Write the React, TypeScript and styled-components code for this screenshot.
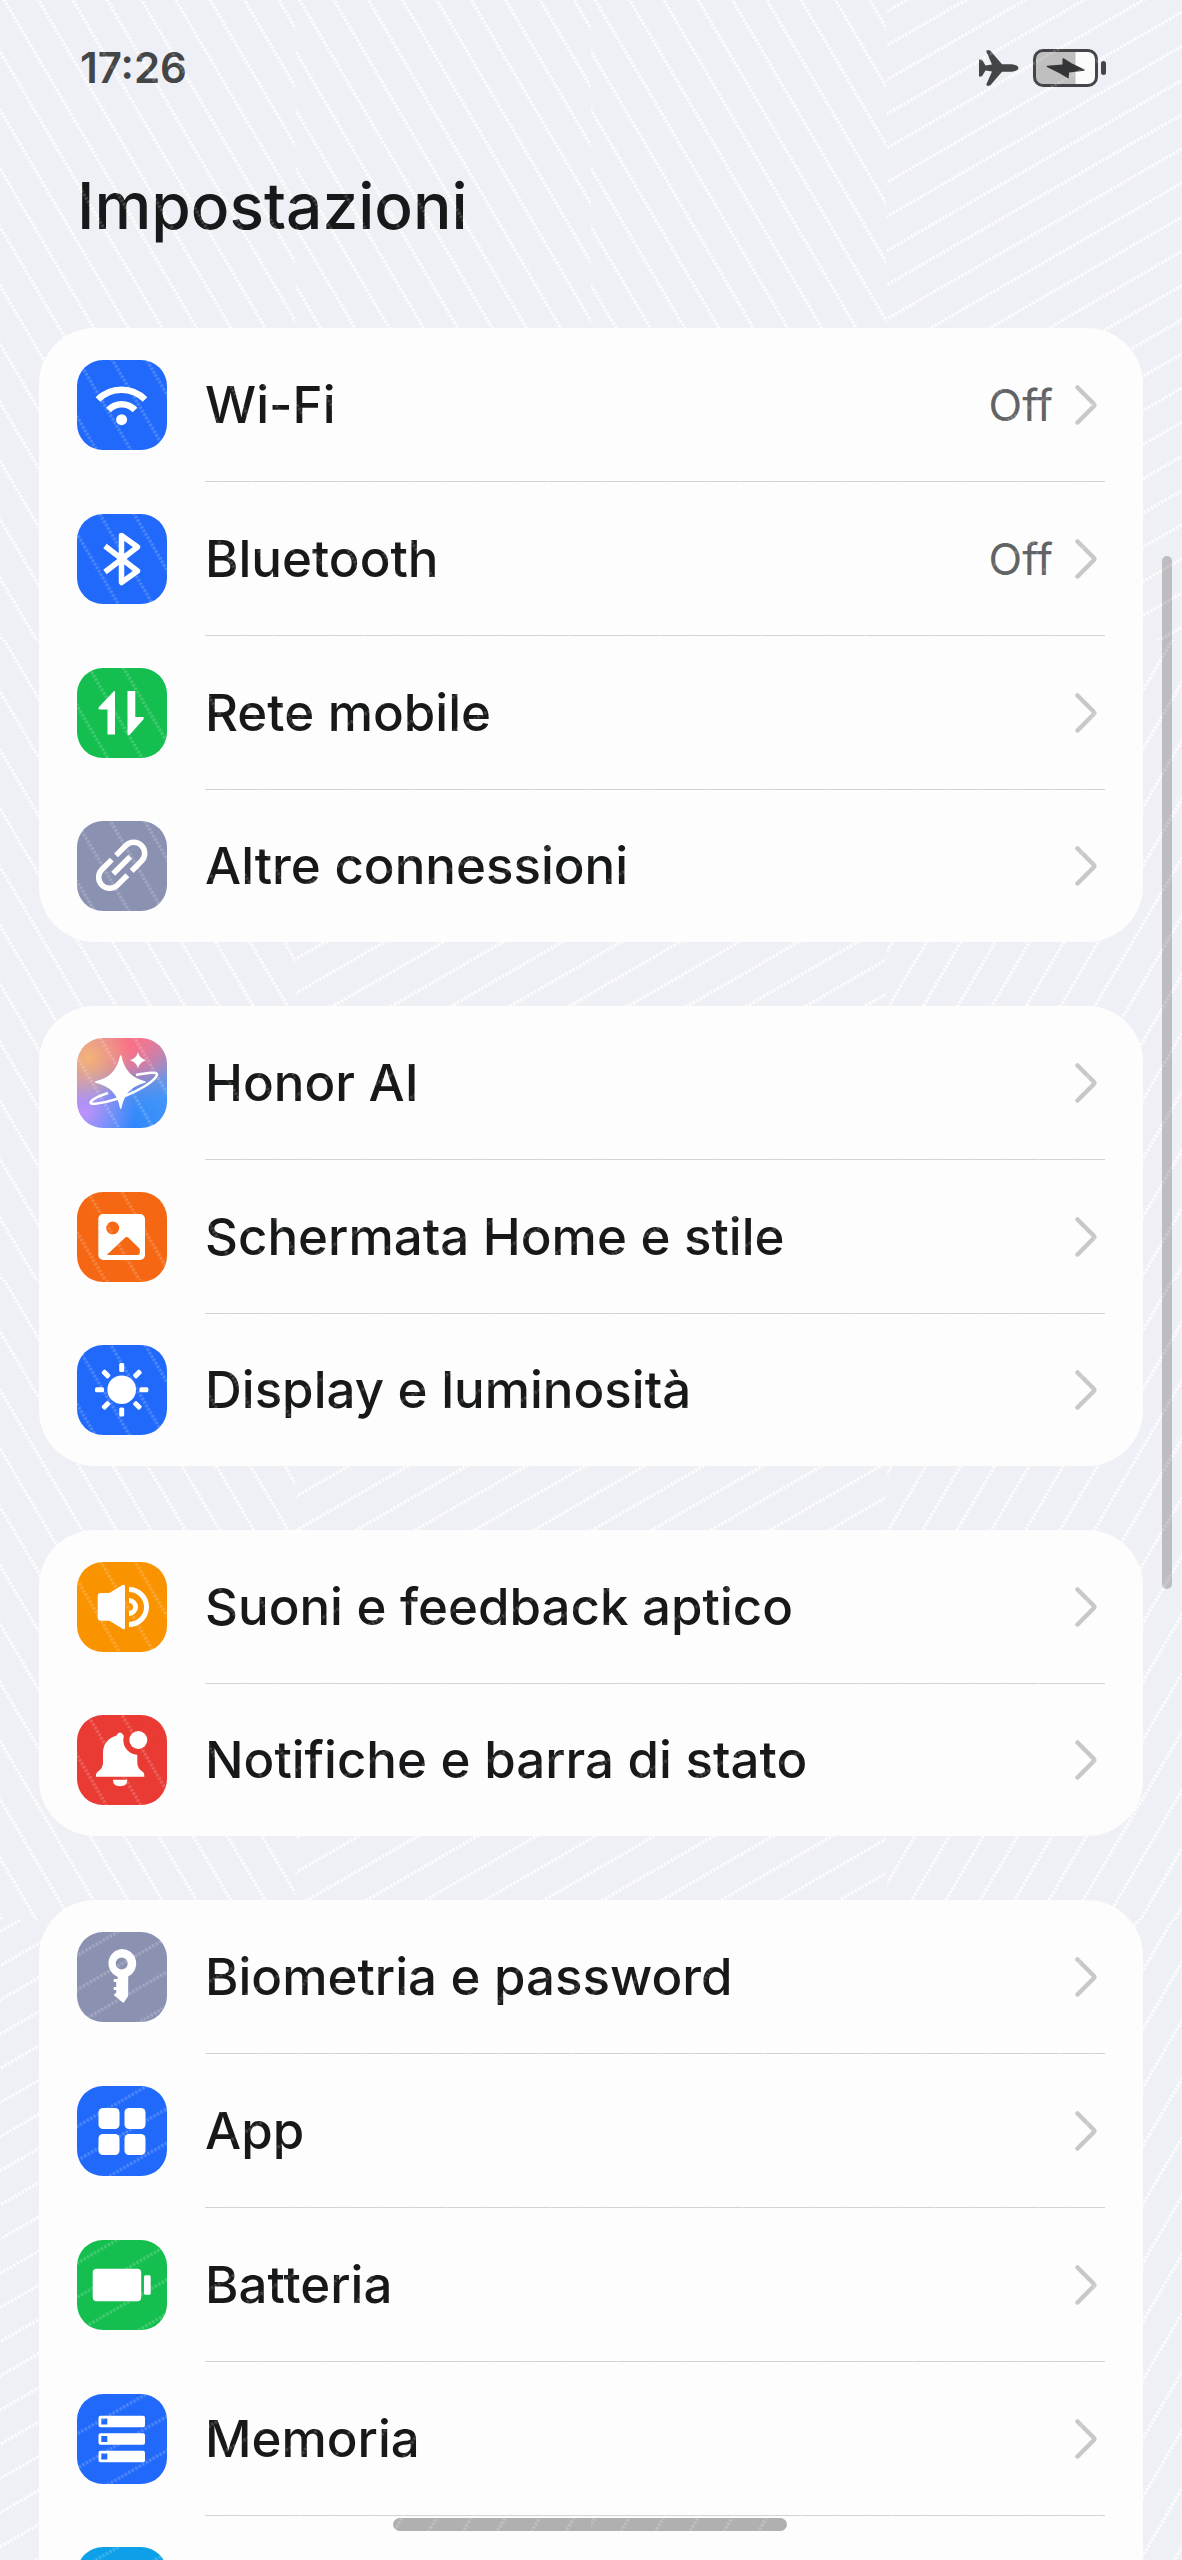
import type { ReactNode } from 'react';
import { createGlobalStyle, styled } from 'styled-components';

type Setting = {
  label: string;
  color: string;
  icon: ReactNode;
  value?: string;
};

const WifiIcon = (
  <g fill="none" stroke="#fff" strokeWidth="6.5">
    <path d="M21 39.5A33 33 0 0 1 68 39.5" />
    <path d="M31.5 50A18 18 0 0 1 58 50" />
    <circle cx="44.6" cy="59.7" r="5.5" fill="#fff" stroke="none" />
  </g>
);

const BluetoothIcon = (
  <path
    d="M28 32 60.5 57 44.5 68.5V21.5L60.5 33 28 58"
    fill="none"
    stroke="#fff"
    strokeWidth="5.5"
    strokeLinejoin="round"
  />
);

const MobileIcon = (
  <path
    d="M37 23q1 0 1 1V66.5H30.5V41.5H22.5q-2-.5-.5-2.5ZM50.5 23h7.8v26h7.5q2 .5.5 2.5L52.5 67q-2 .5-2-1Z"
    fill="#fff"
  />
);

const LinkIcon = (
  <g transform="translate(44.7 44.3) rotate(-45)" fill="none" stroke="#fff" strokeWidth="5.5">
    <path d="M3 -11H17a11 11 0 0 1 0 22H3" />
    <path d="M-3 11H-17a11 11 0 0 1 0-22H-3" />
    <path d="M-12 0H12" />
  </g>
);

const HonorIcon = (
  <>
    <path
      d="M43.7 18C46.5 33 54 41 68 44 54 47.5 46.5 55 43.7 70 41 55 33 47.5 18.7 44 33 41 41 33 43.7 18Z"
      fill="#fff"
      stroke="#fff"
      strokeWidth="1.5"
      strokeLinejoin="round"
    />
    <path d="M61 14q1.5 6.5 8 8.3-6.5 1.8-8 8.3-1.5-6.5-8-8.3 6.5-1.8 8-8.3Z" fill="#fff" />
    <path
      d="M31 55C13 61 8 67 20 65.5 46 62 76 46 80 37 81 33 70 35 59 37"
      fill="none"
      stroke="#fff"
      strokeWidth="2.4"
    />
  </>
);

const PictureIcon = (
  <>
    <rect x="21.3" y="22" width="46.7" height="46" rx="5" fill="#fff" />
    <circle cx="35.7" cy="36" r="6.5" fill="#f56713" />
    <path d="M29.7 63 48 45.8q1.7-1.5 3.4 0L62 56q.8.8.8 2v2.5q0 2.5-2.5 2.5Z" fill="#f56713" />
  </>
);

const SunIcon = (
  <>
    <circle cx="44.7" cy="44.7" r="14.3" fill="#fff" />
    {[0, 45, 90, 135, 180, 225, 270, 315].map((angle) => (
      <rect
        key={angle}
        x="42.2"
        y="18"
        width="5"
        height="9"
        rx="1.5"
        fill="#fff"
        transform={`rotate(${angle} 44.7 44.7)`}
      />
    ))}
  </>
);

const SoundIcon = (
  <>
    <path
      d="M24 31h7q2 0 3.5-1.2L45.5 23q2.5-1.2 2.5 1.5v41q0 2.7-2.5 1.3L34.5 60Q33 58.8 31 58.8H24q-3.3 0-3.3-3.3V34.3Q20.7 31 24 31Z"
      fill="#fff"
    />
    <g fill="none" stroke="#fff" strokeWidth="5">
      <path d="M52 38.5a6.5 6.5 0 0 1 0 13" />
      <path d="M52 27.5a17.5 17.5 0 0 1 0 35" />
    </g>
  </>
);

const BellIcon = (
  <>
    <path
      d="M39.5 20.5Q41 17.5 43 17.5t3.5 3C56 23 60.3 30 60.3 38v10q0 5 5 8.5 2 1.3 2 3.3v1.9H19v-1.9q0-2 2-3.3 5-3.5 5-8.5V38c0-8 4.5-15 13.5-17.5Z"
      fill="#fff"
    />
    <path d="M36 64.7H50.3q0 6.5-7.2 6.5T36 64.7Z" fill="#fff" />
    <circle cx="61.3" cy="25" r="15" fill="#e93a33" />
    <circle cx="61.3" cy="25" r="9" fill="#fff" />
  </>
);

const KeyIcon = (
  <path
    fillRule="evenodd"
    d="M44.7 17a14.5 14.5 0 0 1 6.5 27.5V63q0 1.5-1 2.5l-3 4.5q-1 1.5-2 0l-8.5-7 2.5-2.5v-2.5h-2.5v-3h2.5v-5h-2.5v-3h4V45A14.5 14.5 0 0 1 44.7 17Zm0 8.5a6 6 0 1 0 0 12 6 6 0 1 0 0-12Z"
    fill="#fff"
  />
);

const AppsIcon = (
  <g fill="#fff">
    <rect x="21.5" y="22" width="21" height="21" rx="4.5" />
    <rect x="47.5" y="22" width="21" height="21" rx="4.5" />
    <rect x="21.5" y="48" width="21" height="21" rx="4.5" />
    <rect x="47.5" y="48" width="21" height="21" rx="4.5" />
  </g>
);

const BatteryIcon = (
  <g fill="#fff">
    <rect x="15.7" y="28.7" width="48.5" height="32.5" rx="4" />
    <rect x="67" y="35.3" width="6.7" height="19.4" rx="1.5" />
  </g>
);

const StorageIcon = (
  <>
    {[21.7, 39.2, 56.7].map((y) => (
      <g key={y}>
        <rect x="21.5" y={y} width="46.5" height="11.6" rx="2" fill="#fff" />
        <rect x="24.3" y={y + 2.8} width="6" height="6" fill="#2069fa" />
      </g>
    ))}
  </>
);

const groups: Setting[][] = [
  [
    { label: 'Wi-Fi', color: '#2069fa', icon: WifiIcon, value: 'Off' },
    { label: 'Bluetooth', color: '#2069fa', icon: BluetoothIcon, value: 'Off' },
    { label: 'Rete mobile', color: '#14be4f', icon: MobileIcon },
    { label: 'Altre connessioni', color: '#8b91b1', icon: LinkIcon },
  ],
  [
    {
      label: 'Honor AI',
      color:
        'radial-gradient(circle at 12% 22%, #f3b377 0%, #f3b37700 42%), radial-gradient(circle at 58% 8%, #fb6f86 0%, #fb6f8600 48%), radial-gradient(circle at 8% 82%, #bd92fb 0%, #bd92fb00 46%), radial-gradient(circle at 60% 100%, #2f86fb 0%, #2f86fb00 60%), linear-gradient(160deg, #d985a8 20%, #4a9bf7 75%)',
      icon: HonorIcon,
    },
    { label: 'Schermata Home e stile', color: '#f56713', icon: PictureIcon },
    { label: 'Display e luminosità', color: '#2069fa', icon: SunIcon },
  ],
  [
    { label: 'Suoni e feedback aptico', color: '#fa9300', icon: SoundIcon },
    { label: 'Notifiche e barra di stato', color: '#e93a33', icon: BellIcon },
  ],
  [
    { label: 'Biometria e password', color: '#8b91b1', icon: KeyIcon },
    { label: 'App', color: '#2069fa', icon: AppsIcon },
    { label: 'Batteria', color: '#14be4f', icon: BatteryIcon },
    { label: 'Memoria', color: '#2069fa', icon: StorageIcon },
    { label: '', color: '#0da0e8', icon: null },
  ],
];

// Direction of the dotted lines in each cell of the 4 x 4 backdrop
const cells = [
  ['fall', 'fall', 'fall', 'low'],
  ['fall', 'low', 'low', 'rise'],
  ['fall', 'low', 'low', 'rise'],
  ['low', 'rise', 'rise', 'rise'],
];

const lines = [
  { name: 'fall', angle: 59.6, start: 52 },
  { name: 'low', angle: -30, start: 12 },
  { name: 'rise', angle: -59.6, start: 20 },
];

const DottedLines = ({ id, opacity }: { id: string; opacity: number }) => (
  <Backdrop aria-hidden="true" opacity={opacity}>
    <defs>
      {lines.map(({ name, angle, start }) => (
        <pattern
          key={name}
          id={`${id}-${name}`}
          width="4"
          height="29.6"
          patternUnits="userSpaceOnUse"
          patternTransform={`translate(0 ${start}) rotate(${angle}) translate(0 -3)`}
        >
          <rect x="0.6" y="1" width="2.6" height="3.4" rx="0.8" fill="#fff" />
        </pattern>
      ))}
    </defs>
    {cells.map((row, y) =>
      row.map((name, x) => (
        <svg key={`${x}-${y}`} x={`${x * 25}%`} y={`${y * 25}%`} width="25%" height="25%">
          <rect width="100%" height="100%" fill={`url(#${id}-${name})`} />
        </svg>
      ))
    )}
  </Backdrop>
);

const SettingRow = ({ label, color, icon, value }: Setting) => (
  <li>
    <RowLink href="#">
      <IconTile $color={color}>
        <svg viewBox="0 0 90 90" width="90" height="90" aria-hidden="true">
          {icon}
        </svg>
      </IconTile>
      <RowBody>
        <Label>{label}</Label>
        {value && <Value>{value}</Value>}
        <svg viewBox="0 0 22 40" width="22" height="40" aria-hidden="true">
          <path
            d="M2.5 2.5 18.5 18.5q1.5 1.5 0 3L2.5 37.5"
            fill="none"
            stroke="#c8c8c8"
            strokeWidth="4.5"
            strokeLinecap="round"
          />
        </svg>
      </RowBody>
    </RowLink>
  </li>
);

const App = () => {
  return (
    <Screen>
      <GlobalStyle />
      <DottedLines id="back" opacity={0.9} />
      <StatusBar>
        <time>17:26</time>
        <StatusIcons>
          <svg viewBox="0 0 40 36" width="40" height="36" aria-hidden="true">
            <path
              d="M0 9.5H2q1 0 1.5 1L6.5 15.5 13 14.5 7.5 2Q7 .3 8.5.3H10q1 0 1.800 1L23 14.3H33q6.5 1 6.5 3.7T33 21.7H23L11.8 34.7q-.8 1-1.8 1H8.5q-1.5 0-1-1.7L13 21.5 6.5 20.5 3.5 25.5q-.5 1-1.5 1H0V9.5Z"
              fill="#434547"
            />
          </svg>
          <svg viewBox="0 0 74 38" width="74" height="38" aria-hidden="true">
            <rect x="1.5" y="1.5" width="62" height="35" rx="8.5" fill="#fbfbfc" />
            <path d="M10 1.5H42.5V36.5H10a8.5 8.5 0 0 1-8.5-8.5V10A8.5 8.5 0 0 1 10 1.5Z" fill="#bfbfc0" />
            <rect x="1.5" y="1.5" width="62" height="35" rx="8.5" fill="none" stroke="#434547" strokeWidth="3" />
            <path
              d="M29.5 10q0-1.2 1.2-.7L39 14.5 51.5 20.5q1 .8-.3 1.2L36 23.5v5q0 1.2-1.2.7L27 24.5 14 18q-1-.8.3-1.2L29.5 15.5Z"
              fill="#333537"
            />
            <rect x="68" y="12" width="5" height="14" rx="2.5" fill="#434547" />
          </svg>
        </StatusIcons>
      </StatusBar>
      <Title>Impostazioni</Title>
      <Groups>
        {groups.map((settings, index) => (
          <Card key={index}>
            {settings.map((setting) => (
              <SettingRow key={setting.label} {...setting} />
            ))}
          </Card>
        ))}
      </Groups>
      <ScrollThumb />
      <HomeIndicator />
      <DottedLines id="front" opacity={0.2} />
    </Screen>
  );
};

export default App;

const GlobalStyle = createGlobalStyle`
  body {
    margin: 0;
    background-color: #eff0f5;
    color: #171819;
    font-family: Inter, 'Liberation Sans', sans-serif;
  }
`;

const Screen = styled.main`
  position: relative;
  height: 100vh;
  overflow: hidden;
`;

const Backdrop = styled.svg`
  position: absolute;
  inset: 0;
  width: 100%;
  height: 100%;
  pointer-events: none;
`;

const StatusBar = styled.header`
  position: relative;
  display: flex;
  align-items: center;
  justify-content: space-between;
  padding: 40px 75px 0 80px;
  color: #434547;
  font-size: 42px;
  font-weight: 600;
  line-height: 56px;
`;

const StatusIcons = styled.div`
  display: flex;
  align-items: center;
  gap: 14px;
`;

const Title = styled.h1`
  position: relative;
  margin: 0;
  padding: 64px 77px 76px;
  font-size: 64px;
  font-weight: 550;
  line-height: 92px;
`;

const Groups = styled.div`
  position: relative;
  display: grid;
  gap: 64px;
  padding: 0 39px;
`;

const Card = styled.ul`
  margin: 0;
  padding: 0 38px;
  list-style: none;
  border-radius: 56px;
  background-color: #fdfdfd;
`;

const RowBody = styled.div`
  flex: 1;
  display: flex;
  align-items: center;
  height: 153px;
  padding-right: 8px;
  border-bottom: 1px solid #d2d2d3;

  li:last-child & {
    height: 152px;
    border-bottom: 0;
  }
`;

const RowLink = styled.a`
  display: flex;
  align-items: center;
  gap: 38px;
  color: inherit;
  text-decoration: none;
`;

const IconTile = styled.span<{ $color: string }>`
  display: block;
  width: 90px;
  height: 90px;
  border-radius: 26px;
  background: ${({ $color }) => $color};
`;

const Label = styled.span`
  flex: 1;
  font-size: 51px;
  font-weight: 450;
  line-height: 64px;
`;

const Value = styled.span`
  margin-right: 22px;
  color: #626364;
  font-size: 44px;
  line-height: 64px;
`;

const ScrollThumb = styled.div`
  position: absolute;
  top: 556px;
  right: 10px;
  width: 10px;
  height: 1033px;
  border-radius: 5px;
  background-color: #bdbdc1;
`;

const HomeIndicator = styled.div`
  position: absolute;
  bottom: 29px;
  left: 50%;
  width: 394px;
  height: 13px;
  margin-left: -198px;
  border-radius: 7px;
  background-color: #b0b0b0;
`;
